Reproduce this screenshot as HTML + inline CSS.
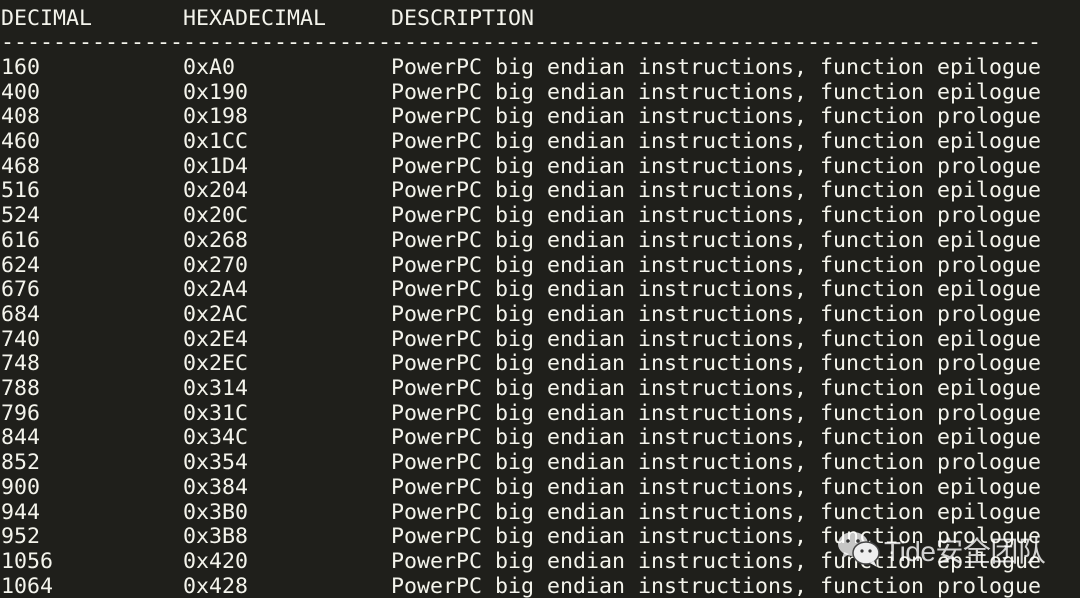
<!DOCTYPE html>
<html><head><meta charset="utf-8"><style>
html,body{margin:0;padding:0;background:#1f1f1b;width:1080px;height:598px;overflow:hidden}
pre{margin:0;padding:6.5px 0 0 1px;font-family:"DejaVu Sans Mono","Liberation Mono",monospace;font-size:21.6px;line-height:24.71px;color:#f4f4ec;white-space:pre}
.wm{position:absolute;left:884px;top:530px;font-family:"Liberation Sans","Noto Sans CJK SC",sans-serif;font-size:28px;color:rgba(255,255,255,0.8);white-space:nowrap;letter-spacing:-0.5px}
svg{position:absolute;left:836px;top:530px}
</style></head><body>
<pre>DECIMAL       HEXADECIMAL     DESCRIPTION
--------------------------------------------------------------------------------
160           0xA0            PowerPC big endian instructions, function epilogue
400           0x190           PowerPC big endian instructions, function epilogue
408           0x198           PowerPC big endian instructions, function prologue
460           0x1CC           PowerPC big endian instructions, function epilogue
468           0x1D4           PowerPC big endian instructions, function prologue
516           0x204           PowerPC big endian instructions, function epilogue
524           0x20C           PowerPC big endian instructions, function prologue
616           0x268           PowerPC big endian instructions, function epilogue
624           0x270           PowerPC big endian instructions, function prologue
676           0x2A4           PowerPC big endian instructions, function epilogue
684           0x2AC           PowerPC big endian instructions, function prologue
740           0x2E4           PowerPC big endian instructions, function epilogue
748           0x2EC           PowerPC big endian instructions, function prologue
788           0x314           PowerPC big endian instructions, function epilogue
796           0x31C           PowerPC big endian instructions, function prologue
844           0x34C           PowerPC big endian instructions, function epilogue
852           0x354           PowerPC big endian instructions, function prologue
900           0x384           PowerPC big endian instructions, function epilogue
944           0x3B0           PowerPC big endian instructions, function epilogue
952           0x3B8           PowerPC big endian instructions, function prologue
1056          0x420           PowerPC big endian instructions, function epilogue
1064          0x428           PowerPC big endian instructions, function prologue</pre>
<svg width="46" height="38" viewBox="0 0 46 38">
<ellipse cx="17" cy="14" rx="15" ry="12" fill="rgba(255,255,255,0.75)"/>
<path d="M8 22 L6 29 L13 24Z" fill="rgba(255,255,255,0.75)"/>
<circle cx="12" cy="11" r="1.8" fill="#333"/><circle cx="22" cy="11" r="1.8" fill="#333"/>
<ellipse cx="30" cy="23" rx="13" ry="11" fill="#eee" stroke="#444" stroke-width="1.5"/>
<path d="M38 31 L41 37 L34 33Z" fill="#eee"/>
<circle cx="26" cy="21" r="1.6" fill="#333"/><circle cx="34" cy="21" r="1.6" fill="#333"/>
</svg>
<div class="wm">Tide安全团队</div>
</body></html>
